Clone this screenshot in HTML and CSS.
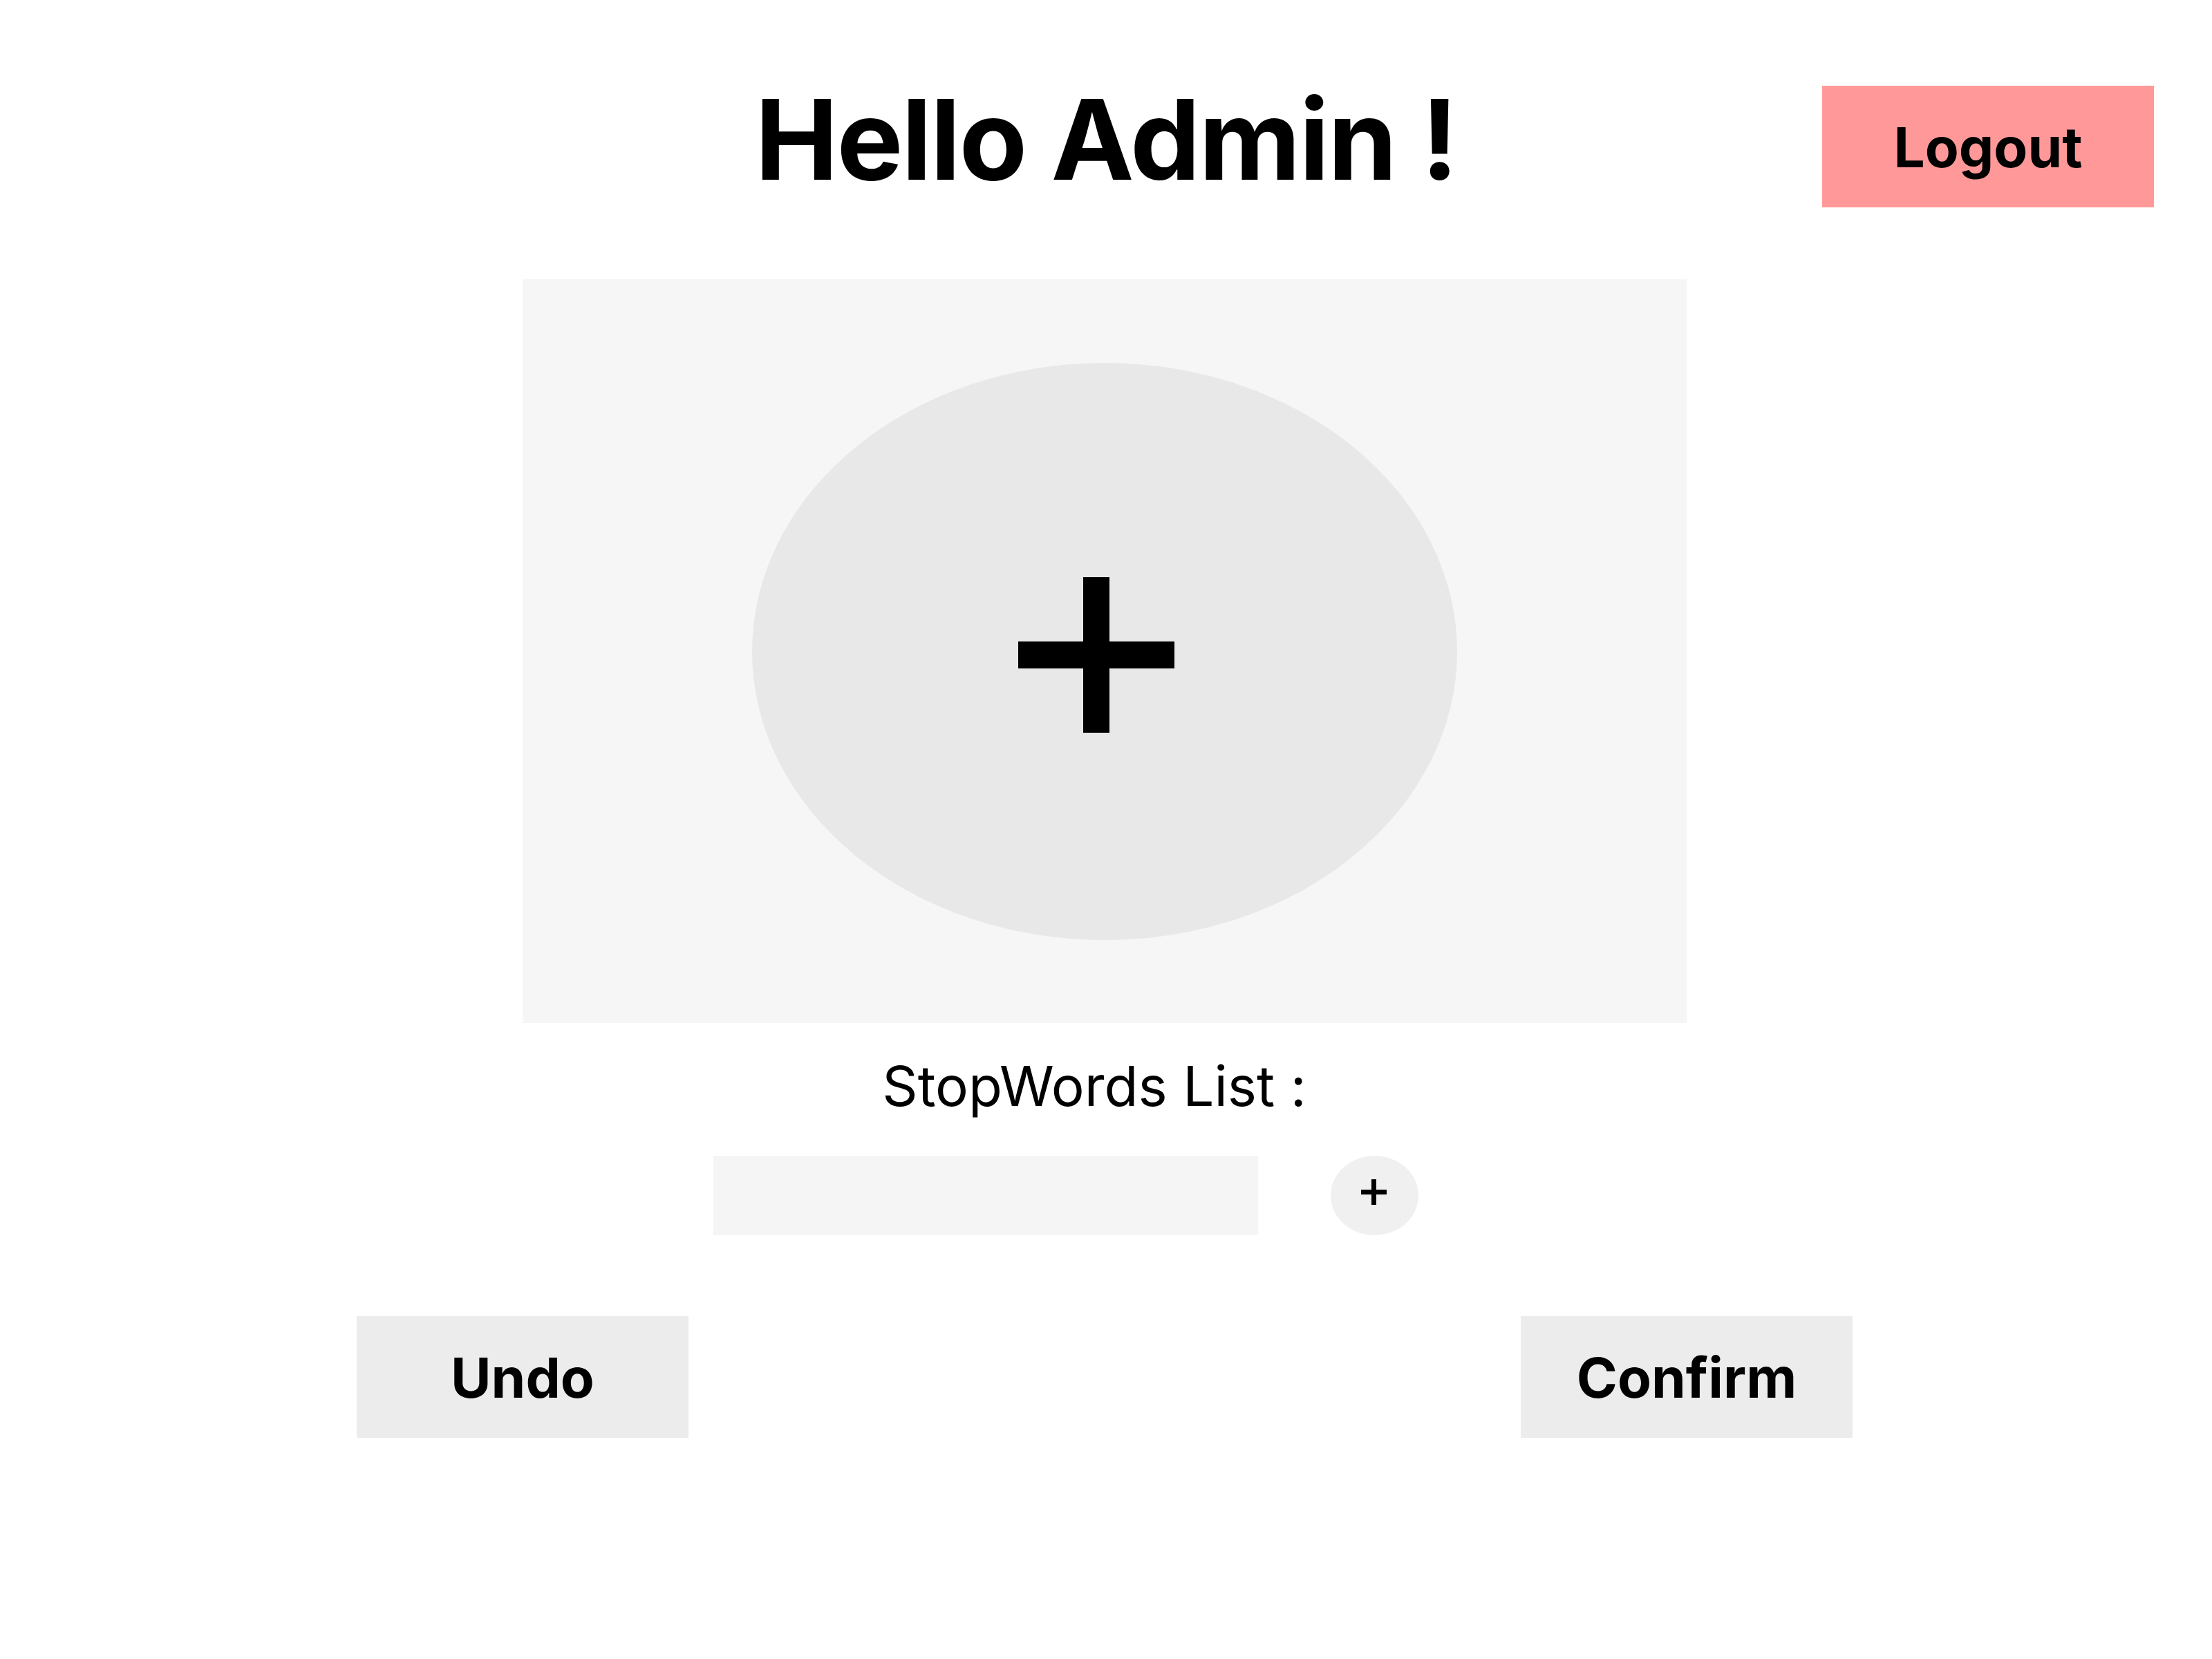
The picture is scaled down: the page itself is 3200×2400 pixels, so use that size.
FILE: index.html
```html
<!DOCTYPE html>
<html lang="en">
<head>
<meta charset="utf-8">
<title>Admin</title>
<link rel="stylesheet" href="styles.css">
</head>
<body>
<header class="header">
  <div class="spacer"></div>
  <h1 class="title">Hello Admin !</h1>
  <div class="header-right">
    <button class="btn btn-logout">Logout</button>
  </div>
</header>
<main class="main">
  <section class="upload-panel">
    <div class="upload-circle">
      <svg class="upload-plus" width="226" height="225" viewBox="0 0 226 225">
        <rect x="94" y="0" width="38" height="225" fill="#000"/>
        <rect x="0" y="93" width="226" height="39" fill="#000"/>
      </svg>
    </div>
  </section>
  <p class="label">StopWords List :</p>
  <div class="add-row">
    <input class="word-input" type="text" aria-label="Stop word">
    <button class="add-btn" aria-label="Add">
      <svg width="37" height="37" viewBox="0 0 37 37">
        <rect x="15" y="0" width="7" height="37" fill="#000"/>
        <rect x="0" y="15" width="37" height="7" fill="#000"/>
      </svg>
    </button>
  </div>
  <div class="actions">
    <button class="btn btn-gray">Undo</button>
    <button class="btn btn-gray">Confirm</button>
  </div>
</main>
</body>
</html>
```

FILE: styles.css
```css
html, body {
  margin: 0;
  padding: 0;
  background: #ffffff;
}
body {
  font-family: Inter, "Noto Sans", sans-serif;
  color: #000;
  width: 3200px;
}
.header {
  display: grid;
  grid-template-columns: 1fr auto 1fr;
  align-items: start;
  height: 300px;
}
.title {
  margin: 121px 0 0 0;
  font-size: 161px;
  line-height: 1;
  font-weight: 700;
  letter-spacing: -2px;
  white-space: nowrap;
}
.header-right {
  display: flex;
  justify-content: flex-end;
  padding-right: 84px;
}
.btn {
  width: 480px;
  height: 176px;
  border: none;
  padding: 0;
  font-family: Inter, sans-serif;
  font-weight: 700;
  font-size: 80px;
  color: #000;
}
.btn-logout {
  margin-top: 124px;
  background: #ff9999;
}
.btn-gray {
  background: #ececec;
}
.main {
  display: flex;
  flex-direction: column;
  align-items: center;
}
.upload-panel {
  margin-top: 104px;
  width: 1684px;
  height: 1076px;
  background: #f6f6f6;
  display: flex;
  align-items: center;
  justify-content: center;
  margin-right: 4px;
}
.upload-circle {
  width: 1020px;
  height: 835px;
  border-radius: 50%;
  background: #e8e8e8;
  display: flex;
  align-items: center;
  justify-content: center;
}
.upload-plus {
  margin-right: 24px;
  margin-top: 10px;
}
.label {
  margin: 51px 34px 0 0;
  font-size: 80px;
  line-height: 1;
  font-weight: 400;
}
.add-row {
  margin-top: 61px;
  display: flex;
  gap: 105px;
  padding-right: 116px;
}
.word-input {
  width: 788px;
  height: 115px;
  box-sizing: border-box;
  border: none;
  background: #f5f5f5;
  padding: 0;
  outline: none;
}
.add-btn {
  width: 127px;
  height: 115px;
  border: none;
  border-radius: 50%;
  background: #f0f0f0;
  padding: 0;
  display: flex;
  align-items: center;
  justify-content: center;
}
.add-btn svg {
  margin-top: -11px;
  margin-left: -3px;
}
.actions {
  margin-top: 117px;
  width: 2164px;
  display: flex;
  justify-content: space-between;
  margin-right: 4px;
}
```
